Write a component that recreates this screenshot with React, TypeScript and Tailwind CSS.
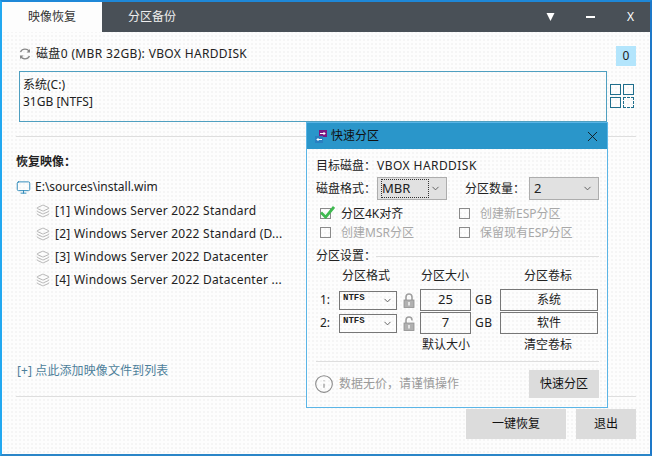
import { ChevronDown, Info, Layers, Monitor, X } from "lucide-react"

const images = [
  "[1] Windows Server 2022 Standard",
  "[2] Windows Server 2022 Standard (D...",
  "[3] Windows Server 2022 Datacenter",
  "[4] Windows Server 2022 Datacenter ...",
]

const partitions = [
  { id: "1:", size: "25", label: "系统", open: false },
  { id: "2:", size: "7", label: "软件", open: true },
]

function SwapIcon({ className }: { className: string }) {
  return (
    <svg viewBox="0 0 12 13" className={className}>
      <rect x="4" y="0" width="8" height="7" fill="#7b1a84" />
      <rect x="0" y="6" width="8" height="7" fill="#2a7fc0" />
      <path d="M5 3.5h5M8.5 2l1.5 1.5L8.5 5" stroke="#fff" fill="none" />
      <path d="M7 9.5H2M3.5 8L2 9.5 3.5 11" stroke="#fff" fill="none" />
    </svg>
  )
}

function LockIcon({ open }: { open: boolean }) {
  return (
    <svg viewBox="0 0 12 15" className="ml-[6px] h-[15px] w-[12px]">
      <path
        d={open ? "M3 7V4a3 3 0 0 1 6 0v.5" : "M3 7V4a3 3 0 0 1 6 0v3"}
        stroke="#a0a0a0"
        strokeWidth="1.6"
        fill="none"
      />
      <rect x="1" y="7" width="10" height="7.5" fill="#b0b0b0" stroke="#909090" strokeWidth="0.8" />
      <rect x="5.2" y="9" width="1.6" height="3.5" fill="#f0f0f0" />
    </svg>
  )
}

function Check({ checked, label }: { checked?: boolean; label: string }) {
  return (
    <div className="flex h-[19px] items-center">
      <div className="relative h-[11px] w-[11px] border border-[#8a8a8a]">
        {checked && (
          <svg viewBox="0 0 16 14" className="absolute -top-[3px] -left-[1px] h-[13px] w-[15px]">
            <path d="M1 7l5 5 9-11" stroke="#3fb950" strokeWidth="3" fill="none" />
          </svg>
        )}
      </div>
      <span className={`ml-[10px] text-[12px] ${checked ? "text-[#222]" : "text-[#a8a8a8]"}`}>{label}</span>
    </div>
  )
}

function QuickPartition() {
  return (
    <div className="absolute top-[122px] left-[306px] h-[286px] w-[302px] border border-[#5bb5e6] bg-[#fdfdfd] bg-[radial-gradient(#f5f5f5_1px,transparent_1px)] bg-[length:4px_4px] text-[12px] text-[#222]">
      <div className="flex h-[26px] items-center bg-[#2a96ca] pr-[6px] pl-[8px]">
        <SwapIcon className="h-[13px] w-[12px]" />
        <span className="ml-[4px] text-[12px] text-[#111]">快速分区</span>
        <X className="ml-auto h-[17px] w-[17px] text-[#111]" strokeWidth={1.2} />
      </div>

      <div className="flex flex-col pr-[8px] pl-[9px]">
        <div className="mt-[8px] flex h-[18px] items-center">
          <span className="w-[61px]">目标磁盘：</span>
          <span className="tracking-[0.45px]">VBOX HARDDISK</span>
        </div>

        <div className="mt-[2px] flex h-[23px] items-center">
          <span className="w-[61px]">磁盘格式：</span>
          <div className="flex h-[23px] w-[70px] items-center justify-between border border-[#adadad] bg-[#e1e1e1] pr-[5px] pl-[3px] text-[13px]">
            <span className="border border-dotted border-[#333] pr-[18px] leading-[17px]">MBR</span>
            <ChevronDown className="h-[11px] w-[11px] text-[#555]" />
          </div>
          <span className="ml-[18px] w-[64px]">分区数量：</span>
          <div className="flex h-[23px] w-[70px] items-center justify-between border border-[#adadad] bg-[#e1e1e1] pr-[5px] pl-[4px] text-[13px]">
            <span>2</span>
            <ChevronDown className="h-[11px] w-[11px] text-[#555]" />
          </div>
        </div>

        <div className="mt-[4px] grid grid-cols-[139px_1fr] pl-[4px]">
          <Check checked label="分区4K对齐" />
          <Check label="创建新ESP分区" />
          <Check label="创建MSR分区" />
          <Check label="保留现有ESP分区" />
        </div>

        <div className="mt-[5px] flex h-[18px] items-center">
          <span className="w-[60px]">分区设置：</span>
          <div className="h-px flex-1 bg-[#dedede]" />
        </div>

        <div className="mt-[2px] flex h-[18px] items-center leading-[18px]">
          <span className="ml-[26px] w-[79px]">分区格式</span>
          <span className="w-[103px]">分区大小</span>
          <span>分区卷标</span>
        </div>

        <div className="mt-[4px] flex flex-col gap-px">
          {partitions.map((p) => (
            <div key={p.id} className="flex h-[22px] items-center">
              <span className="ml-[4px] w-[19px]">{p.id}</span>
              <div className="flex h-[19px] w-[58px] items-center justify-between border border-[#777] pr-[3px] pl-[3px] font-['Liberation_Mono',monospace] text-[9px] font-bold">
                <span className="-mt-[3px]">NTFS</span>
                <ChevronDown className="h-[11px] w-[11px] text-[#555]" />
              </div>
              <LockIcon open={p.open} />
              <div className="ml-[5px] flex h-[22px] w-[51px] items-center justify-center border border-[#777] text-[13px]">{p.size}</div>
              <span className="ml-[4px] w-[25px] text-[12px] tracking-[0.4px]">GB</span>
              <div className="flex h-[22px] w-[98px] items-center justify-center border border-[#777]">{p.label}</div>
            </div>
          ))}
        </div>

        <div className="mt-px flex h-[20px] items-center leading-[20px]">
          <span className="ml-[106px] w-[102px]">默认大小</span>
          <span>清空卷标</span>
        </div>

        <div className="mt-[6px] h-px bg-[#dedede]" />

        <div className="mt-[8px] flex h-[28px] items-center">
          <Info className="-ml-[2px] h-[20px] w-[20px] text-[#8a8a8a]" strokeWidth={1.3} />
          <span className="ml-[5px] text-[#9a9a9a]">数据无价，请谨慎操作</span>
          <div className="ml-auto flex h-[28px] w-[70px] items-center justify-center bg-[#dcdcdc] text-[#111]">快速分区</div>
        </div>
      </div>
    </div>
  )
}

export default function App() {
  return (
    <div className="relative h-[456px] w-[652px] overflow-hidden border-t-2 border-r-2 border-b-2 border-l-2 border-t-[#1e88d8] border-r-[#1e78c8] border-b-[#2a86c8] border-l-[#22a8f0] bg-[#fdfdfd] bg-[radial-gradient(#f5f5f5_1px,transparent_1px)] bg-[length:4px_4px] font-['Noto_Sans','Noto_Sans_CJK_SC',sans-serif] text-[12px] text-[#222]">
      <div className="flex h-[30px] bg-[#495057] text-[12px]">
        <div className="flex w-[100px] items-center justify-center bg-[#fdfdfd] text-[#333]">映像恢复</div>
        <div className="flex w-[100px] items-center justify-center text-[#eee]">分区备份</div>
        <div className="ml-auto flex items-center text-white">
          <svg viewBox="0 0 8 8" className="mr-[31px] h-[8px] w-[9px]">
            <path d="M0 0h8L4 8z" fill="#fff" />
          </svg>
          <div className="mr-[32px] h-[2px] w-[9px] bg-white" />
          <span className="mr-[16px] text-[12px]">X</span>
        </div>
      </div>

      <div className="flex flex-col pr-[14px] pl-[14px]">
        <div className="mt-[12px] flex h-[20px] items-center pl-[3px]">
          <svg viewBox="0 0 12 12" className="h-[12px] w-[12px]">
            <path d="M10.5 4A5 5 0 0 0 1.5 4M1.5 8a5 5 0 0 0 9 0" stroke="#888" strokeWidth="1.3" fill="none" />
            <path d="M11 1v3.5H7.5M1 11V7.5h3.5" fill="#888" />
          </svg>
          <span className="ml-[5px] text-[12px] tracking-[0.35px]">磁盘0 (MBR 32GB): VBOX HARDDISK</span>
          <div className="mt-[4px] ml-auto flex h-[20px] w-[20px] items-center justify-center bg-[#b3e5fc] text-[12px]">0</div>
        </div>

        <div className="mt-[7px] flex pl-[3px]">
          <div className="h-[51px] w-[588px] border border-[#4f9fc0] pt-[4px] pl-[3px] leading-[17px]">
            <div>系统(C:)</div>
            <div>31GB [NTFS]</div>
          </div>
          <div className="mt-[13px] ml-[3px] grid h-[24px] w-[24px] grid-cols-2 gap-[2px]">
            <div className="border border-[#1f6e8c]" />
            <div className="border border-[#1f6e8c]" />
            <div className="border border-[#1f6e8c]" />
            <div className="border border-dashed border-[#1f6e8c]" />
          </div>
        </div>

        <div className="mt-[14px] h-px bg-[#dedede]" />

        <div className="mt-[16px] h-[18px] leading-[18px] font-bold">恢复映像：</div>

        <div className="mt-[4px] flex h-[24px] items-center">
          <Monitor className="h-[15px] w-[15px] text-[#2a86b8]" strokeWidth={1.5} />
          <span className="ml-[4px]">E:\sources\install.wim</span>
        </div>
        <div className="flex flex-col">
          {images.map((name) => (
            <div key={name} className="flex h-[23px] items-center pl-[20px]">
              <Layers className="h-[14px] w-[14px] text-[#a0a0a0]" strokeWidth={1.3} />
              <span className="ml-[5px] tracking-[0.25px]">{name}</span>
            </div>
          ))}
        </div>

        <div className="mt-[71px] h-[18px] pl-px leading-[18px] tracking-[0.1px] text-[#4d7f9a]">[+] 点此添加映像文件到列表</div>

        <div className="mt-[16px] h-px bg-[#dedede]" />

        <div className="mt-[12px] flex justify-end gap-[10px] text-[#111]">
          <div className="flex h-[30px] w-[100px] items-center justify-center bg-[#dcdcdc]">一键恢复</div>
          <div className="flex h-[30px] w-[60px] items-center justify-center bg-[#dcdcdc]">退出</div>
        </div>
      </div>

      <div className="absolute -top-[2px] -left-[2px]">
        <QuickPartition />
      </div>
    </div>
  )
}
